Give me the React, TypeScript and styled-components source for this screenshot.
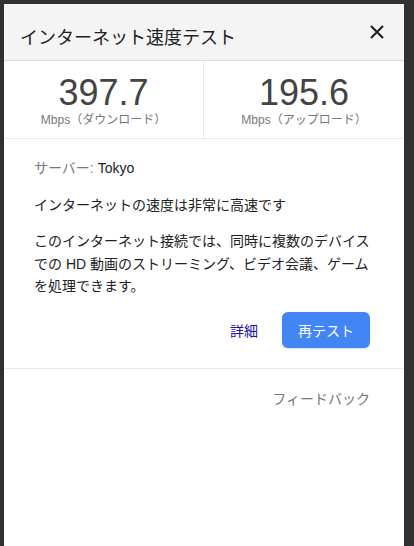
import styled, { createGlobalStyle } from 'styled-components';

const GlobalStyle = createGlobalStyle`
	html, body {
		margin: 0;
		padding: 0;
		height: 100%;
		background: #313131;
	}
	body {
		font-family: 'Liberation Sans', 'Noto Sans CJK JP', sans-serif;
		overflow: hidden;
	}
`;

const Page = styled.div`
	padding: 4px 10px 0 4px;
	height: 546px;
	box-sizing: border-box;
`;

const Dialog = styled.div`
	width: 400px;
	height: 100%;
	background: #fff;
	display: flex;
	flex-direction: column;
`;

const Header = styled.div`
	height: 56px;
	background: #f4f4f4;
	border-bottom: 1px solid #dcdcdc;
	display: flex;
	align-items: center;
	justify-content: space-between;
	padding: 0 18px 0 16px;
`;

const Title = styled.h1`
	margin: 0;
	font-size: 18px;
	font-weight: 400;
	color: #222;
	padding-top: 7px;
`;

const CloseButton = styled.button`
	border: none;
	background: none;
	padding: 0;
	width: 18px;
	height: 18px;
	display: flex;
	cursor: pointer;
`;

const Stats = styled.div`
	display: grid;
	grid-template-columns: 1fr 1fr;
	border-bottom: 1px solid #e8e8e8;
	height: 77px;
`;

const Stat = styled.div<{ $divider?: boolean }>`
	display: flex;
	flex-direction: column;
	align-items: center;
	padding-top: 13px;
	border-right: ${(p) => (p.$divider ? '1px solid #e8e8e8' : 'none')};
`;

const Value = styled.div`
	font-size: 36px;
	line-height: 38px;
	color: #444;
`;

const Unit = styled.div`
	font-size: 12px;
	color: #777;
	line-height: 16px;
`;

const Body = styled.div`
	padding: 18px 28px 0 30px;
	font-size: 14px;
	color: #222;
`;

const Line = styled.p<{ $gap?: number }>`
	margin: 0 0 ${(p) => p.$gap ?? 14}px;
	line-height: 22.5px;
`;

const Muted = styled.span`
	color: #777;
`;

const Actions = styled.div`
	display: flex;
	justify-content: flex-end;
	align-items: center;
	gap: 24px;
	margin-top: 14px;
	padding: 0 6px 20px 0;
`;

const TextLink = styled.a`
	color: #1a0dab;
	font-size: 14px;
	text-decoration: none;
	cursor: pointer;
`;

const RetestButton = styled.button`
	width: 88px;
	height: 36px;
	background: #4285f4;
	color: #fff;
	border: none;
	border-radius: 6px;
	font-family: inherit;
	font-size: 14px;
	box-shadow: 0 1px 2px rgba(0, 0, 0, 0.15);
	cursor: pointer;
`;

const Footer = styled.div`
	border-top: 1px solid #e8e8e8;
	display: flex;
	justify-content: flex-end;
	padding: 19px 34px 0;
`;

const Feedback = styled.a`
	color: #777;
	font-size: 14px;
	cursor: pointer;
`;

export default function App() {
	return (
		<>
			<GlobalStyle />
			<Page>
				<Dialog>
					<Header>
						<Title>インターネット速度テスト</Title>
						<CloseButton aria-label='閉じる'>
							<svg width='18' height='18' viewBox='0 0 18 18'>
								<path d='M3 3 L15 15 M15 3 L3 15' stroke='#222' strokeWidth='2.2' />
							</svg>
						</CloseButton>
					</Header>
					<Stats>
						<Stat $divider>
							<Value>397.7</Value>
							<Unit>Mbps（ダウンロード）</Unit>
						</Stat>
						<Stat>
							<Value>195.6</Value>
							<Unit>Mbps（アップロード）</Unit>
						</Stat>
					</Stats>
					<Body>
						<Line>
							<Muted>サーバー: </Muted>Tokyo
						</Line>
						<Line>インターネットの速度は非常に高速です</Line>
						<Line $gap={0}>
							このインターネット接続では、同時に複数のデバイスでの HD 動画のストリーミング、ビデオ会議、ゲームを処理できます。
						</Line>
						<Actions>
							<TextLink>詳細</TextLink>
							<RetestButton>再テスト</RetestButton>
						</Actions>
					</Body>
					<Footer>
						<Feedback>フィードバック</Feedback>
					</Footer>
				</Dialog>
			</Page>
		</>
	);
}
